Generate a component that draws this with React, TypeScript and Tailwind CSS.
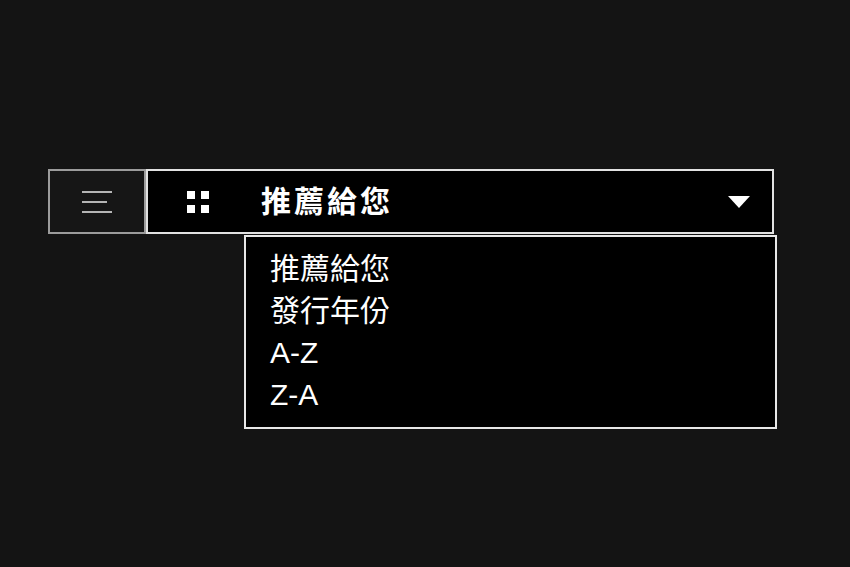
import React from 'react';

const options = ['推薦給您', '發行年份', 'A-Z', 'Z-A'];

function MenuIcon() {
    return (
        <div className="flex flex-col gap-[8px]">
            <span className="block h-[2px] w-[30px] bg-[#b5b5b5]" />
            <span className="block h-[2px] w-[25px] bg-[#b5b5b5]" />
            <span className="block h-[2px] w-[30px] bg-[#b5b5b5]" />
        </div>
    );
}

function GridIcon() {
    return (
        <div className="grid grid-cols-2 gap-[6px]">
            <span className="block h-[8px] w-[8px] bg-white" />
            <span className="block h-[8px] w-[8px] bg-white" />
            <span className="block h-[8px] w-[8px] bg-white" />
            <span className="block h-[8px] w-[8px] bg-white" />
        </div>
    );
}

export default function App() {
    return (
        <div
            className="min-h-[567px] w-full bg-[#141414] pl-[48px] pt-[169px]"
            style={{ fontFamily: '"Liberation Sans", "Noto Sans CJK TC", sans-serif' }}
        >
            <div className="flex">
                <button className="flex h-[65px] w-[98px] items-center justify-center border-2 border-[#9c9c9c] bg-[#161616]">
                    <MenuIcon />
                </button>
                <div className="relative">
                    <button className="flex h-[65px] w-[628px] items-center border-2 border-[#e2e2e2] bg-black pl-[39px] pr-[22px] text-white">
                        <GridIcon />
                        <span className="ml-[52px] text-[30px] font-bold leading-none tracking-[3px]">推薦給您</span>
                        <svg className="ml-auto" width="22" height="12" viewBox="0 0 22 12">
                            <path d="M0 0H22L11 12Z" fill="#fff" />
                        </svg>
                    </button>
                    <ul className="absolute left-[98px] top-[66px] w-[533px] border-2 border-[#e8e8e8] bg-black px-[24px] py-[11px] text-white">
                        {options.map((opt) => (
                            <li key={opt} className="h-[42px] text-[30px] leading-[42px]">
                                {opt}
                            </li>
                        ))}
                    </ul>
                </div>
            </div>
        </div>
    );
}
